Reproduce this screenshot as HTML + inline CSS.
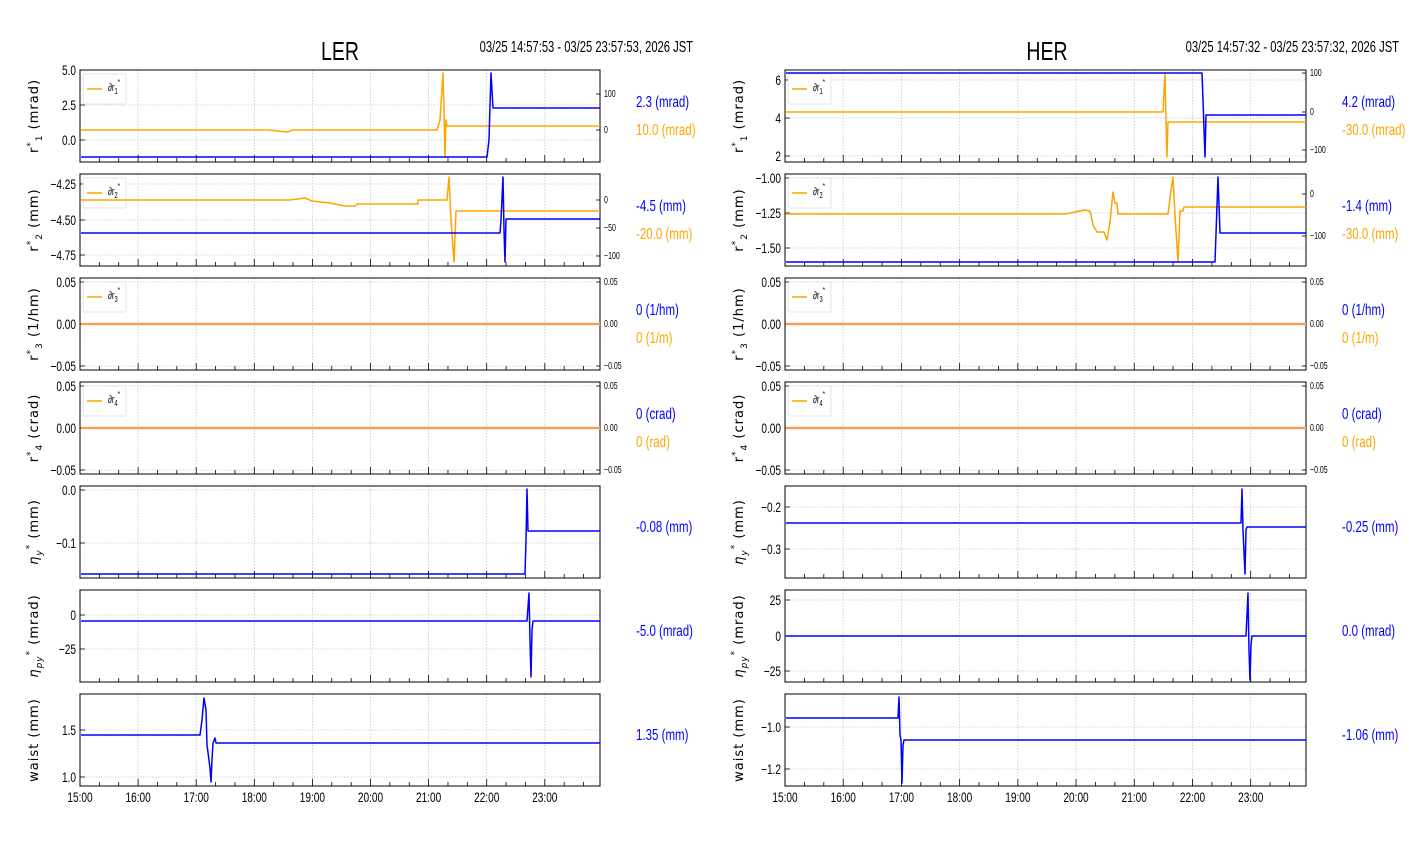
<!DOCTYPE html>
<html><head><meta charset="utf-8"><style>
html,body{margin:0;padding:0;background:#fff;width:1412px;height:864px;overflow:hidden}
svg{display:block}
</style></head><body>
<svg id="s" width="1412" height="864" xmlns="http://www.w3.org/2000/svg"></svg>
<script>
const S=document.getElementById('s');let h='';
function T(x,y,str,size,col,anchor,sx,extra){sx=sx||0.78;h+=`<text transform="translate(${x},${y}) scale(${sx},1)" font-family="Liberation Sans, sans-serif" font-size="${size}" fill="${col||'#000'}" text-anchor="${anchor||'start'}" ${extra||''}>${str}</text>`;}
function P(pts,col,w){h+=`<polyline points="${pts.map(p=>p.join(',')).join(' ')}" fill="none" stroke="${col}" stroke-width="${w||1.5}" stroke-linejoin="round"/>`;}
const B='#0000ff',O='#ffa500';
function panel(x0,x1,y0,y1,yt,rt,ylabel,legend){
  const sp=(x1-x0)/(8+57/60);
  for(let i=1;i<9;i++){const x=x0+i*sp;h+=`<line x1="${x}" y1="${y0}" x2="${x}" y2="${y1}" stroke="#c8c8c8" stroke-dasharray="1.5,1.5" stroke-width="0.8"/>`;}
  yt.forEach(t=>{h+=`<line x1="${x0}" y1="${t[1]}" x2="${x1}" y2="${t[1]}" stroke="#c8c8c8" stroke-dasharray="1.5,1.5" stroke-width="0.8"/>`;
    h+=`<line x1="${x0}" y1="${t[1]}" x2="${x0+5}" y2="${t[1]}" stroke="#000" stroke-width="0.8"/>`;
    T(x0-4,t[1]+5,t[0],14,'#000','end',0.72);});
  for(let i=0;i<27;i++){const x=x0+i*sp/3;if(x>x1)break;const L=i%3==0?7:4;h+=`<line x1="${x}" y1="${y1}" x2="${x}" y2="${y1-L}" stroke="#000" stroke-width="0.8"/>`;}
  if(rt){rt.forEach(t=>{h+=`<line x1="${x1}" y1="${t[1]}" x2="${x1-4}" y2="${t[1]}" stroke="#000" stroke-width="0.8"/>`;T(x1+4,t[1]+3,t[0],10,'#000','start',0.7);});}
  h+=`<rect x="${x0}" y="${y0}" width="${x1-x0}" height="${y1-y0}" fill="none" stroke="#000" stroke-width="1"/>`;
  const cy=(y0+y1)/2;
  h+=`<text transform="translate(${x0-42},${cy}) rotate(-90)" font-family="DejaVu Sans, sans-serif" font-size="13" text-anchor="middle" letter-spacing="1">${ylabel}</text>`;
  if(legend){h+=`<rect x="${x0+3}" y="${y0+4}" width="43" height="30" rx="2" fill="#fff" stroke="#ddd" stroke-width="0.8"/>`;
    h+=`<line x1="${x0+7}" y1="${y0+19}" x2="${x0+22}" y2="${y0+19}" stroke="${O}" stroke-width="1.5"/>`;
    T(x0+28,y0+21,`∂r<tspan font-size="8" dy="3">${legend}</tspan><tspan font-size="8" dy="-9">*</tspan>`,11,'#000','start',0.72);}
}
function xlabels(x0,x1,y){const sp=(x1-x0)/(8+57/60);for(let i=0;i<9;i++)T(x0+i*sp,y,(15+i)+':00',14,'#000','middle',0.72);}
function rlabel(x,y,str,col){T(x,y,str,16,col,'start',0.72);}
function yl(n,u){return `r<tspan font-size="9" dy="-5">*</tspan><tspan font-size="9" dy="9">${n}</tspan><tspan dy="-4"> (${u})</tspan>`;}
const eta1=`<tspan font-style="italic">η</tspan><tspan font-size="9" dy="4" font-style="italic">y</tspan><tspan font-size="9" dy="-10">*</tspan><tspan dy="6"> (mm)</tspan>`;
const eta2=`<tspan font-style="italic">η</tspan><tspan font-size="9" dy="4" font-style="italic">py</tspan><tspan font-size="9" dy="-10">*</tspan><tspan dy="6"> (mrad)</tspan>`;
let a=80,b=600;
T(340,60,'LER',26,'#000','middle',0.75);
T(693,52,'03/25 14:57:53 - 03/25 23:57:53, 2026 JST',16,'#000','end',0.7);
panel(a,b,70,162,[['5.0',70],['2.5',105],['0.0',140]],[['100',94],['0',130]],yl(1,'mrad'),1);
P([[81,130],[268,130],[278,131],[288,132],[292,130],[420,130],[437,130],[440,120],[443,73],[444,110],[445,157],[446,120],[447,126],[600,126]],O);
P([[81,157],[487,157],[489,140],[491,73],[493,108],[600,108]],B);
panel(a,b,174,266,[['−4.25',184],['−4.50',220],['−4.75',255]],[['0',200],['−50',228],['−100',256]],yl(2,'mm'),2);
P([[81,200],[290,200],[305,198],[312,201],[330,203],[345,206],[355,206],[357,204],[418,204],[418,200],[447,200],[449,177],[451,220],[454,262],[456,211],[600,211]],O);
P([[81,233],[500,233],[501,220],[503,177],[504,230],[505,262],[506,219],[600,219]],B);
panel(a,b,278,370,[['0.05',282],['0.00',324],['−0.05',366]],[['0.05',282],['0.00',324],['−0.05',366]],yl(3,'1/hm'),3);
P([[81,324],[600,324]],'#e8a0a0',2.5);P([[81,324],[600,324]],O,1);
panel(a,b,382,474,[['0.05',386],['0.00',428],['−0.05',470]],[['0.05',386],['0.00',428],['−0.05',470]],yl(4,'crad'),4);
P([[81,428],[600,428]],'#e8a0a0',2.5);P([[81,428],[600,428]],O,1);
panel(a,b,486,578,[['0.0',490],['−0.1',543]],null,eta1,0);
P([[81,574],[525,574],[526,540],[527,489],[528,531],[600,531]],B);
panel(a,b,590,682,[['0',615],['−25',649]],null,eta2,0);
P([[81,621],[527,621],[529,593],[530,640],[531,677],[532,630],[533,621],[600,621]],B);
panel(a,b,694,786,[['1.5',730],['1.0',777]],null,'waist (mm)',0);
P([[81,735],[200,735],[202,720],[204,698],[206,710],[207,745],[209,760],[210,768],[211,782],[212,760],[213,743],[215,738],[216,743],[600,743]],B);
xlabels(a,b,802);
rlabel(636,107,'2.3 (mrad)',B);rlabel(636,135,'10.0 (mrad)',O);
rlabel(636,211,'-4.5 (mm)',B);rlabel(636,239,'-20.0 (mm)',O);
rlabel(636,315,'0 (1/hm)',B);rlabel(636,343,'0 (1/m)',O);
rlabel(636,419,'0 (crad)',B);rlabel(636,447,'0 (rad)',O);
rlabel(636,532,'-0.08 (mm)',B);rlabel(636,636,'-5.0 (mrad)',B);rlabel(636,740,'1.35 (mm)',B);
a=785;b=1306;
T(1047,60,'HER',26,'#000','middle',0.75);
T(1399,52,'03/25 14:57:32 - 03/25 23:57:32, 2026 JST',16,'#000','end',0.7);
panel(a,b,70,162,[['6',80],['4',118],['2',156]],[['100',73],['0',112],['−100',150]],yl(1,'mrad'),1);
P([[786,112],[1163,112],[1165,73],[1166,120],[1167,157],[1168,122],[1306,122]],O);
P([[786,73],[1202,73],[1203,100],[1205,157],[1206,115],[1306,115]],B);
panel(a,b,174,266,[['−1.00',178],['−1.25',213],['−1.50',248]],[['0',194],['−100',236]],yl(2,'mm'),2);
P([[786,214],[1065,214],[1075,212],[1085,210],[1090,211],[1093,225],[1097,232],[1104,232],[1107,240],[1110,222],[1113,192],[1115,203],[1117,203],[1118,214],[1168,214],[1171,190],[1173,177],[1175,215],[1178,262],[1180,211],[1183,211],[1184,207],[1306,207]],O);
P([[786,262],[1215,262],[1218,177],[1220,233],[1306,233]],B);
panel(a,b,278,370,[['0.05',282],['0.00',324],['−0.05',366]],[['0.05',282],['0.00',324],['−0.05',366]],yl(3,'1/hm'),3);
P([[786,324],[1306,324]],'#e8a0a0',2.5);P([[786,324],[1306,324]],O,1);
panel(a,b,382,474,[['0.05',386],['0.00',428],['−0.05',470]],[['0.05',386],['0.00',428],['−0.05',470]],yl(4,'crad'),4);
P([[786,428],[1306,428]],'#e8a0a0',2.5);P([[786,428],[1306,428]],O,1);
panel(a,b,486,578,[['−0.2',507],['−0.3',549]],null,eta1,0);
P([[786,523],[1241,523],[1242,489],[1243,530],[1245,574],[1246,530],[1247,527],[1306,527]],B);
panel(a,b,590,682,[['25',600],['0',636],['−25',671]],null,eta2,0);
P([[786,636],[1246,636],[1248,593],[1249,650],[1250,680],[1251,645],[1252,636],[1306,636]],B);
panel(a,b,694,786,[['−1.0',727],['−1.2',769]],null,'waist (mm)',0);
P([[786,718],[898,718],[899,697],[900,735],[901,740],[902,783],[903,745],[904,740],[1306,740]],B);
xlabels(a,b,802);
rlabel(1342,107,'4.2 (mrad)',B);rlabel(1342,135,'-30.0 (mrad)',O);
rlabel(1342,211,'-1.4 (mm)',B);rlabel(1342,239,'-30.0 (mm)',O);
rlabel(1342,315,'0 (1/hm)',B);rlabel(1342,343,'0 (1/m)',O);
rlabel(1342,419,'0 (crad)',B);rlabel(1342,447,'0 (rad)',O);
rlabel(1342,532,'-0.25 (mm)',B);rlabel(1342,636,'0.0 (mrad)',B);rlabel(1342,740,'-1.06 (mm)',B);
S.innerHTML=h;
</script>
</body></html>
